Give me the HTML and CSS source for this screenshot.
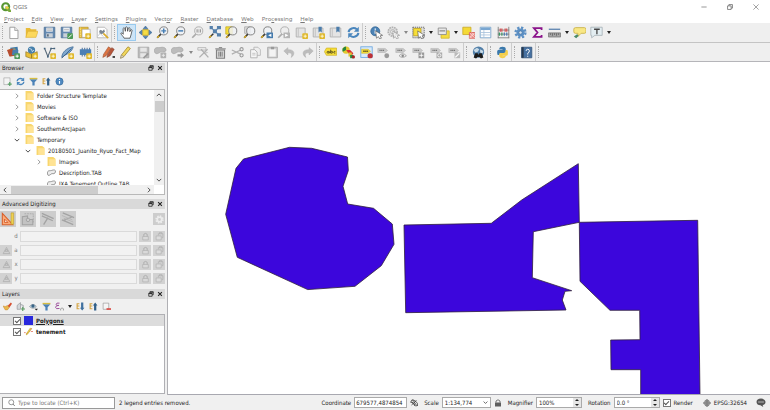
FILE: index.html
```
<!DOCTYPE html>
<html lang="en">
<head>
<meta charset="utf-8">
<title>QGIS</title>
<link rel="stylesheet" href="styles.css">
</head>
<body>
<svg class="defs" aria-hidden="true">
  <defs>
    <g id="plus"><rect x="9" y="9" width="7" height="7" rx="1" fill="#e0b92e"/><path d="M12.500 10.500v4M10.500 12.500h4" stroke="#fff8d8" stroke-width="1.200"/></g>
    <g id="gplus"><rect x="9" y="9" width="7" height="7" rx="1" fill="#4f9a5b"/><path d="M12.500 10.500v4M10.500 12.500h4" stroke="#fff" stroke-width="1.200"/></g>
    <g id="lens"><path d="M6 10L1.500 14.500" stroke="#333" stroke-width="2"/><path d="M4 12L1.500 14.500" stroke="#dcae20" stroke-width="1.600"/><circle cx="9.500" cy="6" r="5" fill="#eef1f4" fill-opacity=".85" stroke="#777" stroke-width="1.100"/></g>
    <g id="glens"><path d="M6 10L1.500 14.500" stroke="#aaa" stroke-width="2"/><circle cx="9.500" cy="6" r="5" fill="#eee" stroke="#aaa" stroke-width="1.100"/></g>
    <g id="cursor"><path d="M7 6l1 9 2.300-2 1.700 3 2-1-1.500-3 3-.5z" fill="#fff" stroke="#555" stroke-width=".8"/></g>
    <g id="gtag"><path d="M1 3h9l3 2.500L10 8H1z" fill="#c9c9c9" stroke="#aaa" stroke-width=".6"/><path d="M3 5.500h6" stroke="#777" stroke-width="1.500" stroke-dasharray="1.500 .6"/></g>
    <g id="blob"><path d="M1 8c-2-4 1-6.500 4-6 2 .3 3-.5 5-.5 5 0 6 4 3.500 5.500-2 1-3.500-.5-5.500.5S3 11 1 8z" fill="#bcbcbc" stroke="#a0a0a0" stroke-width=".8"/></g>
    <symbol id="i-new" viewBox="0 0 16 16"><path d="M3.500 1.500h6l4 4v10h-10z" fill="#fff" stroke="#8c8c8c"/><path d="M9.500 1.500v4h4" fill="#e6e6e6" stroke="#8c8c8c" stroke-width=".8"/></symbol>
    <symbol id="i-open" viewBox="0 0 16 16"><path d="M1 14V2.500h5L7.500 4H14v3" fill="#e8bb37"/><path d="M1 14L3.500 6.500H16L13.500 14z" fill="#fcd85c" stroke="#dcae36" stroke-width=".7"/></symbol>
    <symbol id="i-save" viewBox="0 0 16 16"><path d="M1.500 1.500h13v13h-13z" fill="#6389b1" stroke="#4d7196"/><path d="M4 2h8v5H4z" fill="#e9edf1"/><path d="M5 3.500h6M5 5.300h6" stroke="#999" stroke-width=".7"/><path d="M4 9h8v5H4z" fill="#c9d1d9"/><path d="M5 10h2v3H5z" fill="#567"/></symbol>
    <symbol id="i-saveas" viewBox="0 0 16 16"><path d="M1.500 1.500h13v13h-13z" fill="#6389b1" stroke="#4d7196"/><path d="M4 2h8v5H4z" fill="#e9edf1"/><path d="M5 4.500h6" stroke="#999" stroke-width=".7"/><path d="M4 9h6v5H4z" fill="#c9d1d9"/><rect x="9" y="9" width="7" height="7" rx="1" fill="#4c9a56"/><path d="M10.500 14.500l4-4" stroke="#fff" stroke-width="1.200"/></symbol>
    <symbol id="i-layout" viewBox="0 0 16 16"><path d="M1.500 1.500h11v13h-11z" fill="#e9bd35" stroke="#b08b25" stroke-width=".8"/><path d="M5 4h10v10H5z" fill="#fff" stroke="#999" stroke-width=".7"/><path d="M3 2v12" stroke="#fff3b0" stroke-dasharray="1 1"/><use href="#plus"/></symbol>
    <symbol id="i-style" viewBox="0 0 16 16"><path d="M1.500 1.500h9l3 3v10h-12z" fill="#fff" stroke="#9a9a9a" stroke-width=".8"/><path d="M3 12l4-7M4 8l5 5" stroke="#b6bec6"/><path d="M9 9l6 6" stroke="#d9ab2a" stroke-width="2"/><path d="M5 4.500a3 3 0 0 0 4 4.500l2-2-1-3-2 2z" fill="#7c8791"/></symbol>
    <symbol id="i-hand" viewBox="0 0 16 16"><path d="M5 15c-.5-2-3.500-4-4-6 1-1.200 2.500.3 3 1.200L3.800 3c.8-1.200 2-.7 2.200.3l.6 3.200L6.700 2c.5-1.300 2-1.300 2.300 0l.4 4.500L10.300 2.500c.7-1 1.900-.6 2 .5l-.2 4 1.200-2.200c1-.7 1.700 0 1.500 1L13.500 11l-1.200 4z" fill="#fff" stroke="#383838" stroke-width=".9" stroke-linejoin="round"/></symbol>
    <symbol id="i-pansel" viewBox="0 0 16 16"><path d="M4.500 4.500h7v7h-7z" fill="#f5dc43" stroke="#b79c24"/><path d="M8 0l3 3.500H5zM8 16l3-3.500H5zM0 8l3.500-3v6zM16 8l-3.500-3v6z" fill="#4c7eaf" stroke="#335e88" stroke-width=".5"/></symbol>
    <symbol id="i-zin" viewBox="0 0 16 16"><use href="#lens"/><path d="M9.500 3v6M6.500 6h6" stroke="#467fb5" stroke-width="1.800"/></symbol>
    <symbol id="i-zout" viewBox="0 0 16 16"><use href="#lens"/><path d="M6.500 6h6" stroke="#467fb5" stroke-width="1.800"/></symbol>
    <symbol id="i-znat" viewBox="0 0 16 16"><use href="#glens"/><path d="M7.500 4v4M11.500 4v4M9.500 4.500v1M9.500 6.800v1" stroke="#777"/></symbol>
    <symbol id="i-zfull" viewBox="0 0 16 16"><path d="M3 1l4 4M15 1l-5 4M15 12l-5-4" stroke="#7b9cbd" stroke-width="1.500"/><path d="M2 0h4v4H2zM11 0h5v4h-5zM11 9h5v4h-5zM6 4h5v5H6z" fill="#5580ab"/><path d="M6.500 9.500L1.500 14.500" stroke="#333" stroke-width="1.800"/><path d="M4 12l-2.500 2.500" stroke="#dcae20" stroke-width="1.600"/></symbol>
    <symbol id="i-zsel" viewBox="0 0 16 16"><path d="M1 1h8v9H1z" fill="#f4df36" stroke="#c7ad24"/><use href="#lens"/></symbol>
    <symbol id="i-zlay" viewBox="0 0 16 16"><path d="M2 1h7v8H2z" fill="#ddd" stroke="#aaa"/><use href="#lens"/></symbol>
    <symbol id="i-zlast" viewBox="0 0 16 16"><use href="#lens"/><rect x="8" y="8" width="8" height="7" fill="#457bad"/><path d="M14 9.500l-4 2 4 2" fill="#fff"/></symbol>
    <symbol id="i-znext" viewBox="0 0 16 16"><use href="#glens"/><rect x="8" y="8" width="8" height="7" fill="#b5b5b5"/><path d="M10 9.500l4 2-4 2" fill="#fff"/></symbol>
    <symbol id="i-bmap" viewBox="0 0 16 16"><path d="M1.500 2.500h11v11h-11z" fill="#e4e4e4" stroke="#aaa"/><path d="M4 3v10" stroke="#bbb"/><use href="#plus"/></symbol>
    <symbol id="i-bnew" viewBox="0 0 16 16"><path d="M1.500 2.500h12v11h-12z" fill="#e4e4e4" stroke="#aaa"/><path d="M4 3v10" stroke="#bbb"/><path d="M8 1h4v7l-2-1.500L8 8z" fill="#4b7caa"/><use href="#plus"/></symbol>
    <symbol id="i-bshow" viewBox="0 0 16 16"><path d="M1.500 2.500h13v11h-13z" fill="#e4e4e4" stroke="#aaa"/><path d="M4 3v10" stroke="#bbb"/><path d="M9 1h4v7l-2-1.500L9 8z" fill="#4b7caa"/></symbol>
    <symbol id="i-refresh" viewBox="0 0 16 16"><path d="M2 7.500a6 5.500 0 0 1 10-3.500M14 8.500a6 5.500 0 0 1-10 3.500" fill="none" stroke="#4a86bd" stroke-width="2.600"/><path d="M14.500 1v6H8.500zM1.500 15V9h6z" fill="#4a86bd"/></symbol>
    <symbol id="i-ident" viewBox="0 0 16 16"><circle cx="6.500" cy="6.500" r="5.500" fill="#4b82b5" stroke="#386a99"/><path d="M6.500 5.500v4M6.500 3v1.500" stroke="#fff" stroke-width="1.700"/><use href="#cursor"/></symbol>
    <symbol id="i-ggear" viewBox="0 0 16 16"><circle cx="7" cy="7" r="5.500" fill="#ddd" stroke="#b0b0b0" stroke-width="2" stroke-dasharray="2 1"/><circle cx="7" cy="7" r="2.500" fill="#f2f2f2" stroke="#aaa"/><use href="#cursor" opacity=".6"/></symbol>
    <symbol id="i-select" viewBox="0 0 16 16"><path d="M1 1.500h14v13H1z" fill="#ddd" stroke="#555" stroke-dasharray="1.500 1"/><path d="M2 3h9v9H2z" fill="#f7df37" stroke="#c0a21c"/><use href="#cursor"/></symbol>
    <symbol id="i-desel" viewBox="0 0 16 16"><path d="M5 6h10v9H5z" fill="#f4dc3f" stroke="#d3b62c"/><path d="M1.500 2.500h10v8h-10z" fill="#e8e8e8" stroke="#888"/><path d="M3 6h7" stroke="#888" stroke-width="1.500"/></symbol>
    <symbol id="i-unsel" viewBox="0 0 16 16"><path d="M1 1.500h10v9H1z" fill="#f4d936" stroke="#c9aa28"/><rect x="9" y="8" width="7" height="7" fill="#ed8d87" stroke="#d75750"/><path d="M9 8l7 7M9 12l3 3M12 8l4 4M16 8l-7 7" stroke="#fff" stroke-width=".7"/></symbol>
    <symbol id="i-table" viewBox="0 0 16 16"><path d="M1.500 1.500h13v13h-13z" fill="#fff" stroke="#6d9bc6"/><path d="M2 2h12v3H2z" fill="#79a6d1"/><path d="M2 8h12M2 11h12M6 5v9" stroke="#a7c1dc"/></symbol>
    <symbol id="i-abacus" viewBox="0 0 16 16"><path d="M1.500 1v14M14.500 1v14M1 14.500h14M1 10h14M1 5h14" stroke="#777"/><path d="M4 3v4M6 3v4M10 3v4M12 3v4" stroke="#d24f51" stroke-width="1.500"/><path d="M3 8v4M6 8v4" stroke="#3c9665" stroke-width="1.500"/><path d="M9 8v4M12 8v4" stroke="#4b79b1" stroke-width="1.500"/></symbol>
    <symbol id="i-gear" viewBox="0 0 16 16"><circle cx="8" cy="8" r="6" fill="none" stroke="#5d90c4" stroke-width="3" stroke-dasharray="2.700 2"/><circle cx="8" cy="8" r="5" fill="#5d90c4"/><circle cx="8" cy="8" r="2" fill="#d7e4f0" stroke="#39689a" stroke-width=".7"/></symbol>
    <symbol id="i-sum" viewBox="0 0 16 16"><path d="M13 5V2.500H3.500L8 8l-4.500 5.500H13V11" fill="none" stroke="#8b148b" stroke-width="2.200"/></symbol>
    <symbol id="i-measure" viewBox="0 0 16 16"><path d="M1 4h14" stroke="#527baa" stroke-width="1.500"/><path d="M.5 8.500h15v5H.5z" fill="#a6a6a6" stroke="#777"/><path d="M3 9v2M5.500 9v3M8 9v2M10.500 9v3M13 9v2" stroke="#444" stroke-width=".7"/></symbol>
    <symbol id="i-tip" viewBox="0 0 16 16"><path d="M3 2h11q2 0 2 2v3q0 2-2 2h-4l-4 4V9H3Q1 9 1 7V4q0-2 2-2z" fill="#f8e785" stroke="#c8ae3c"/><path d="M1 13l4-3 2 2-3 3z" fill="#4c8b68"/></symbol>
    <symbol id="i-text" viewBox="0 0 16 16"><path d="M1 1.500h14v10H6l-4 3v-3H1z" fill="#e3edf1" stroke="#a5b0b6"/><path d="M5 4h7M8.500 4v6" stroke="#444" stroke-width="1.600"/></symbol>
    <symbol id="i-source" viewBox="0 0 16 16"><path d="M4 2l9-1 1 9-9 1z" fill="#3b78a8"/><path d="M2 4l8-1 3 8-9 2z" fill="#e2a437"/><path d="M0 5l7-2 3 9-7 1z" fill="#b64e31"/><path d="M7 4l7 1-1 7-7-1z" fill="#487fae"/><use href="#gplus"/></symbol>
    <symbol id="i-gpkg" viewBox="0 0 16 16"><circle cx="8" cy="5" r="4.500" fill="#4680ac"/><path d="M5 3l3 1 1 3 2-2" fill="none" stroke="#dfe9ef"/><path d="M1 7l7 3 7-3v6l-7 2.500L1 13z" fill="#e9bf38" stroke="#8a7220" stroke-width=".8"/><path d="M8 10v5" stroke="#8a7220"/><use href="#plus"/></symbol>
    <symbol id="i-vector" viewBox="0 0 16 16"><path d="M2 3l4 10 4-10h4" fill="none" stroke="#596b7b" stroke-width="1.300"/><path d="M1 2h2v2H1zM9 2h2v2H9zM13 2h2v2h-2zM5 12h2v2H5z" fill="#44647f"/><use href="#plus"/></symbol>
    <symbol id="i-feather" viewBox="0 0 16 16"><path d="M1 14C1 8 7 2 15 1c-1 5-6 9-12 11z" fill="#80a9cf" stroke="#456f99"/><path d="M1 15L13 3" stroke="#305984"/><use href="#plus"/></symbol>
    <symbol id="i-chip" viewBox="0 0 16 16"><path d="M4 2v11M7 2v11M10 2v11M13 2v11" stroke="#56779c" stroke-width="1.300"/><path d="M1 4h14v7H1z" fill="#4b7fb5"/><use href="#plus"/></symbol>
    <symbol id="i-pencils" viewBox="0 0 16 16"><path d="M1 14l1-4L8 1l3 2-6 9z" fill="#dc7342" stroke="#9a5131" stroke-width=".7"/><path d="M6 14l1-4 5-8 3 2-5 8z" fill="#b5553a" stroke="#813d29" stroke-width=".7"/><path d="M13 12.500h3v2h-3z" fill="#222"/></symbol>
    <symbol id="i-pencil" viewBox="0 0 16 16"><path d="M2 15l1-4L11 1l3 2-8 10z" fill="#f0d65c" stroke="#a58b2c"/><path d="M2 15l1-4 3 2z" fill="#eee0b9" stroke="#777" stroke-width=".6"/></symbol>
    <symbol id="i-gsave" viewBox="0 0 16 16"><path d="M1.500 1.500h13v13h-13z" fill="#bbb" stroke="#a5a5a5"/><path d="M4 2h8v5H4zM4 9h7v5H4z" fill="#e6e6e6"/><path d="M8 15l6-6" stroke="#999" stroke-width="2"/></symbol>
    <symbol id="i-blob" viewBox="0 0 16 16"><use href="#blob"/><rect x="8" y="8" width="7" height="7" rx="1" fill="#b2b2b2"/><path d="M11.500 9.500v4M9.500 11.500h4" stroke="#eee"/></symbol>
    <symbol id="i-blobmove" viewBox="0 0 16 16"><use href="#blob"/><path d="M8 10h4V8l4 3.500-4 3.500v-2H8z" fill="#999"/></symbol>
    <symbol id="i-node" viewBox="0 0 16 16"><path d="M5 4l9 10M3 14L13 4" stroke="#b0b0b0" stroke-width="1.600"/><path d="M1 2h10v3H1zM9 9l4-1" fill="none" stroke="#b0b0b0"/></symbol>
    <symbol id="i-trash" viewBox="0 0 16 16"><path d="M3 5h10v10H3z" fill="#d3d3d3" stroke="#808080" stroke-width="1.300"/><path d="M1.500 3.500h13M6 2h4M6 7v6M8 7v6M10 7v6" stroke="#808080" stroke-width="1.200"/></symbol>
    <symbol id="i-cut" viewBox="0 0 16 16"><path d="M1 5l11 5M1 10l11-5" stroke="#b0b0b0" stroke-width="1.400"/><circle cx="13" cy="4" r="2" fill="none" stroke="#999" stroke-width="1.300"/><circle cx="13" cy="11.500" r="2" fill="none" stroke="#999" stroke-width="1.300"/></symbol>
    <symbol id="i-copy" viewBox="0 0 16 16"><path d="M6 1.500h5l3 3v7H6z" fill="#eee" stroke="#b3b3b3"/><path d="M2 4.500h5l3 3v7H2z" fill="#f6f6f6" stroke="#aaa"/><path d="M4 9h4M4 11h4" stroke="#bbb"/></symbol>
    <symbol id="i-paste" viewBox="0 0 16 16"><path d="M2 1.500h12v13H2z" fill="#ccc" stroke="#a5a5a5"/><path d="M4 4h8v9H4z" fill="#f3f3f3"/><path d="M6 1h4v3H6z" fill="#999"/></symbol>
    <symbol id="i-undo" viewBox="0 0 16 16"><path d="M1 6l5-4v2.500c9-.5 9 6.500 4 9.500 2-4 0-6-4-5.500V11z" fill="#bcbcbc" stroke="#a8a8a8" stroke-width=".5"/></symbol>
    <symbol id="i-redo" viewBox="0 0 16 16"><path d="M15 6l-5-4v2.500C1 4 1 11 6 14 4 10 6 8 10 8.500V11z" fill="#bcbcbc" stroke="#a8a8a8" stroke-width=".5"/></symbol>
    <symbol id="i-abc" viewBox="0 0 16 16"><path d="M3 2.500h12.500v9H3L.5 7z" fill="#f7df38" stroke="#c9ac25" stroke-width=".8"/><circle cx="5" cy="7.700" r="1.200" fill="none" stroke="#4b441e"/><path d="M6.500 6.500V9M8.200 4.500V9" stroke="#4b441e"/><circle cx="9.500" cy="7.700" r="1.200" fill="none" stroke="#4b441e"/><path d="M14 6.700q-2-.6-2 1t2 1" fill="none" stroke="#4b441e"/></symbol>
    <symbol id="i-diagram" viewBox="0 0 16 16"><circle cx="5" cy="5" r="4.500" fill="#e3c92c"/><path d="M5 5V.5A4.500 4.500 0 0 0 1 7z" fill="#28863d"/><path d="M5 5h5l4 4-3 4z" fill="#db3030"/><path d="M8 8h4v5H8z" fill="#e1c333"/><path d="M10 11h4v4h-4z" fill="#278c3d"/><circle cx="14" cy="13.500" r="2" fill="#a62725"/></symbol>
    <symbol id="i-pin" viewBox="0 0 16 16"><rect x="1" y="1" width="14" height="13" fill="#d8eafa" stroke="#64a3df"/><path d="M2 4h8l3 2.500L10 9H2z" fill="#f7df38" stroke="#c9ac25" stroke-width=".6"/><path d="M4 6.500h6" stroke="#5b511c" stroke-width="2" stroke-dasharray="1.800 .6"/><circle cx="12.500" cy="12" r="3.200" fill="#bc3036"/></symbol>
    <symbol id="i-lpin" viewBox="0 0 16 16"><use href="#gtag"/><circle cx="12" cy="12" r="3" fill="#999"/></symbol>
    <symbol id="i-leye" viewBox="0 0 16 16"><use href="#gtag"/><path d="M5 12q4-5 9 0-5 4-9 0z" fill="#eee" stroke="#999"/><circle cx="9.500" cy="12" r="1.500" fill="#888"/></symbol>
    <symbol id="i-lmove" viewBox="0 0 16 16"><use href="#gtag"/><rect x="8" y="8" width="7" height="7" fill="#999"/><path d="M9 11.500h5M11.500 9v5" stroke="#fff"/></symbol>
    <symbol id="i-lrot" viewBox="0 0 16 16"><use href="#gtag"/><rect x="8" y="8" width="7" height="7" fill="#aaa"/><circle cx="11.500" cy="11.500" r="2" fill="none" stroke="#fff"/></symbol>
    <symbol id="i-ledit" viewBox="0 0 16 16"><use href="#gtag"/><rect x="8" y="8" width="7" height="7" fill="#bbb"/><path d="M9 14l5-5" stroke="#fff" stroke-width="1.500"/></symbol>
    <symbol id="i-globe" viewBox="0 0 16 16"><circle cx="8" cy="7.500" r="7" fill="#527fa8"/><path d="M2 5l4-3 3 2-2 3-3 1zM10 4l4 2-1 3-3-1z" fill="#c8dae6"/><path d="M2 14l2-5h3l1 2 1-2h3l2 5-3 1.500-2-2H7l-2 2z" fill="#1b1b1b"/></symbol>
    <symbol id="i-python" viewBox="0 0 16 16"><path d="M4 4q0-3 4-3t4 3v3q0 1.500-2 1.500H6q-2 0-2 2.500H2Q1 9 1.500 6 2 4.500 4 4.500h4V4z" fill="#3b79ac"/><path d="M12 12q0 3-4 3t-4-3v-2q0-1.500 2-1.500h4q2 0 2-3.500h2q1.500 3 .5 6-.5 1-2 1H8v.5z" fill="#f5cf4b"/></symbol>
    <symbol id="i-help" viewBox="0 0 16 16"><path d="M2 1.500h12.500v13H2z" fill="#4670a0" stroke="#34557b"/><path d="M2 1.500h2.500v13H2z" fill="#27394e"/><path d="M7.500 6q0-2 2-2t2 2-2 3v1.500M9.500 12v1.300" fill="none" stroke="#fff" stroke-width="1.200"/></symbol>
    <symbol id="i-addlay" viewBox="0 0 16 16"><path d="M1.500 1.500h11v12h-11z" fill="#f4f4f4" stroke="#999"/><path d="M12 9v7M8.500 12.500h7" stroke="#5aa269" stroke-width="2.200"/></symbol>
    <symbol id="i-filter" viewBox="0 0 16 16"><path d="M1 4h14L10 9.500V15H6V9.500z" fill="#4b82b7"/><path d="M1 1.500h14V4H1z" fill="#d7bd42"/></symbol>
    <symbol id="i-collapse" viewBox="0 0 16 16"><path d="M2 2v11M2 3h4M2 7h4M2 12h4" stroke="#d3a343" stroke-width="2"/><path d="M11 1l4 5h-2v9H9V6H7z" fill="#315f88"/></symbol>
    <symbol id="i-expand" viewBox="0 0 16 16"><path d="M2 2v11M2 3h4M2 7h4M2 12h4" stroke="#d3a343" stroke-width="2"/><path d="M11 15l4-5h-2V1H9v9H7z" fill="#3f70a0"/></symbol>
    <symbol id="i-info" viewBox="0 0 16 16"><circle cx="8" cy="8" r="6.500" fill="#4f89c0" stroke="#376998"/><path d="M8 7v5M8 3.500v2" stroke="#fff" stroke-width="2"/></symbol>
    <symbol id="i-folder" viewBox="0 0 16 16"><path d="M1 0h10l4 3v13H1z" fill="#f8d66d"/><path d="M4 4h11v12H4z" fill="#ffe394"/></symbol>
    <symbol id="i-poly" viewBox="0 0 16 16"><path d="M2 13c-2-2-2-7 1-8 3-.5 4 0 6-1 3-1 7-1 6 3s-4 3-6 3-4 4-7 3z" fill="#ededed" stroke="#777" stroke-width="1.300"/></symbol>
    <symbol id="i-right" viewBox="0 0 16 16"><path d="M5 2l6 6-6 6" fill="none" stroke="#777" stroke-width="2"/></symbol>
    <symbol id="i-down" viewBox="0 0 16 16"><path d="M2 5l6 6 6-6" fill="none" stroke="#444" stroke-width="2.500"/></symbol>
    <symbol id="i-up" viewBox="0 0 16 16"><path d="M2 11l6-6 6 6" fill="none" stroke="#444" stroke-width="2.500"/></symbol>
    <symbol id="i-left" viewBox="0 0 16 16"><path d="M11 2L5 8l6 6" fill="none" stroke="#444" stroke-width="2.500"/></symbol>
    <symbol id="i-next" viewBox="0 0 16 16"><path d="M5 2l6 6-6 6" fill="none" stroke="#444" stroke-width="2.500"/></symbol>
    <symbol id="i-float" viewBox="0 0 16 16"><path d="M5 5V2h9v8h-3" fill="none" stroke="#222" stroke-width="2"/><path d="M2 6h9v8H2z" fill="none" stroke="#222" stroke-width="2"/><path d="M5 3h9M2 7h9" stroke="#222" stroke-width="2.500"/></symbol>
    <symbol id="i-close" viewBox="0 0 16 16"><path d="M3 3l10 10M13 3L3 13" stroke="#222" stroke-width="2.800"/></symbol>
    <symbol id="i-triangle" viewBox="0 0 16 16"><path d="M1.500 1.500v13h12z" fill="#fbab79" stroke="#d9602c" stroke-width="1.200"/><path d="M4 8v4h4z" fill="#f1ddd0" stroke="#d9602c"/><path d="M11.500 1h3v13h-3z" fill="#efd04f" stroke="#b89a2d" stroke-width=".7"/></symbol>
    <symbol id="i-construct" viewBox="0 0 16 16"><path d="M1.500 14.500v-9l6-1v4h6v6z" fill="#c2c2c2" stroke="#a3a3a3" stroke-width="1.200"/><path d="M4 2h10v10" fill="none" stroke="#a8a8a8" stroke-dasharray="2 1"/><circle cx="8" cy="9" r="2" fill="#ccc" stroke="#a0a0a0"/></symbol>
    <symbol id="i-perp" viewBox="0 0 16 16"><path d="M1 1.500L14.500 7.500M1 4.500L13.500 10M8 6.500L3 14.500" fill="none" stroke="#a3a3a3" stroke-width="1.500"/></symbol>
    <symbol id="i-para" viewBox="0 0 16 16"><path d="M2 1l13 5.500M1 9l13 5.500M12 6L3 9.500" fill="none" stroke="#a3a3a3" stroke-width="1.500"/><path d="M1 4l12 5M3 7l11 4.500" stroke="#b5b5b5"/></symbol>
    <symbol id="i-angle" viewBox="0 0 16 16"><path d="M2 13.500L8 2.500l6 11zM5.500 9.500l2.500-4 2.500 4z" fill="none" stroke="#ababab" stroke-width="1.300"/></symbol>
    <symbol id="i-glock" viewBox="0 0 16 16"><path d="M5 8V4q3-3 6 0v4" fill="none" stroke="#aaa" stroke-width="1.500"/><path d="M3 8h10v6H3z" fill="#d9d9d9" stroke="#aaa"/></symbol>
    <symbol id="i-gmulti" viewBox="0 0 16 16"><path d="M6 6V3h8v7h-2M8 3V1h4v2" fill="none" stroke="#aaa"/><path d="M2 7h9v7H2z" fill="#dcdcdc" stroke="#aaa"/></symbol>
    <symbol id="i-cog" viewBox="0 0 16 16"><circle cx="8" cy="8" r="6" fill="none" stroke="#ececec" stroke-width="3" stroke-dasharray="2.700 2"/><circle cx="8" cy="8" r="4" fill="none" stroke="#ececec" stroke-width="3"/></symbol>
    <symbol id="i-brush" viewBox="0 0 16 16"><path d="M8 7l6-6 2 2-5 7z" fill="#d64e2e"/><path d="M0 7l4 1 4-2 3 4-3 4H4z" fill="#eab84d" stroke="#c1842d" stroke-width=".8"/></symbol>
    <symbol id="i-group" viewBox="0 0 16 16"><path d="M2 13V6l6-5v12zM8 4l5 2v6" fill="#d3d7da" stroke="#84888b"/><path d="M12 9v7M9 12.500h7" stroke="#589b60" stroke-width="2"/></symbol>
    <symbol id="i-eye" viewBox="0 0 16 16"><path d="M1 8q6-7 12 0-6 6-12 0z" fill="#dce9ef" stroke="#596a78"/><circle cx="7" cy="7" r="3" fill="#396486"/><path d="M10 12h6l-3 3z" fill="#222"/></symbol>
    <symbol id="i-eps" viewBox="0 0 16 16"><path d="M8 2q-6-1-6 2t5 2Q1 6 1 9.500t7 2" fill="none" stroke="#9c4d9a" stroke-width="1.700"/><path d="M10 15v-3q2.500-3 5 0v3" fill="none" stroke="#888" stroke-width="1.300"/></symbol>
    <symbol id="i-remove" viewBox="0 0 16 16"><path d="M2 2h10v11H2z" fill="#f5f5f5" stroke="#888"/><path d="M8 12.500h8" stroke="#dc4c45" stroke-width="3"/></symbol>
    <symbol id="i-line" viewBox="0 0 16 16"><path d="M0 10h3M12 8h4M4 12l4-3 3-3 3-4" stroke="#e37b68" stroke-width="1.500" fill="none"/><path d="M4 14l1-3 6-9 2 1-6 9z" fill="#f2d84b" stroke="#b69423"/></symbol>
    <symbol id="i-search" viewBox="0 0 16 16"><circle cx="8.500" cy="6.500" r="5" fill="none" stroke="#777" stroke-width="1.500"/><path d="M12 10l3.500 4" stroke="#777" stroke-width="1.800"/></symbol>
    <symbol id="i-extent" viewBox="0 0 16 16"><path d="M2 3q5-3 10 2t3 9M1 7q6-3 9 7M5 1l9 13M3 12l10-9M1 4l11 11" stroke="#333" stroke-width="1.500" fill="none"/></symbol>
    <symbol id="i-lock" viewBox="0 0 16 16"><path d="M4 7V4q4-5 8 0v3" fill="none" stroke="#777" stroke-width="2"/><path d="M2 7h12v8H2z" fill="#5e5e5e"/></symbol>
    <symbol id="i-crs" viewBox="0 0 16 16"><path d="M4 3l4-3 4 3 4 5-4 5-4 3-4-3-4-5z" fill="#969696"/><path d="M0 8h16M8 0v16M4 3q4 3 8 0M4 13q4-3 8 0" stroke="#6e6e6e" fill="none"/></symbol>
    <symbol id="i-chat" viewBox="0 0 16 16"><path d="M8 1C3 1 0 3.500 0 7s3 6 7 6l5 3-1-3.500C14 12 16 10 16 7s-3-6-8-6z" fill="#555"/><path d="M3.500 7h2M7 7h2M10.500 7h2" stroke="#fff" stroke-width="2"/></symbol>
  </defs>
</svg>

<header class="titlebar">
  <svg class="logo" viewBox="0 0 16 16" aria-hidden="true"><circle cx="7.500" cy="7.500" r="5.500" fill="none" stroke="#589632" stroke-width="3.500"/><path d="M7 7h4l5 6v3h-3.500L7 11z" fill="#78a83b"/><path d="M7 7h4l2 2-3 3-3-3z" fill="#eed144"/></svg>
  <span class="apptitle">QGIS</span>
  <div class="winbtns">
    <button aria-label="Minimize"><svg viewBox="0 0 16 16"><path d="M1 8h14" stroke="#777" stroke-width="2"/></svg></button>
    <button aria-label="Restore"><svg viewBox="0 0 16 16"><path d="M5 5V1.500h9.500V11H11M1.500 5H11v9.500H1.500z" fill="none" stroke="#666" stroke-width="2"/></svg></button>
    <button aria-label="Close"><svg viewBox="0 0 16 16"><path d="M1 1l14 14M15 1L1 15" stroke="#777" stroke-width="1.800"/></svg></button>
  </div>
</header>
<nav class="menubar">
  <a href="#"><u>P</u>roject</a><a href="#"><u>E</u>dit</a><a href="#"><u>V</u>iew</a><a href="#"><u>L</u>ayer</a><a href="#"><u>S</u>ettings</a><a href="#"><u>P</u>lugins</a><a href="#">Vect<u>o</u>r</a><a href="#"><u>R</u>aster</a><a href="#"><u>D</u>atabase</a><a href="#"><u>W</u>eb</a><a href="#">Pro<u>c</u>essing</a><a href="#"><u>H</u>elp</a>
</nav>

<div class="toolbar">
  <div class="group g-file">
    <button aria-label="New"><svg><use href="#i-new"/></svg></button><button aria-label="Open"><svg><use href="#i-open"/></svg></button><button aria-label="Save"><svg><use href="#i-save"/></svg></button><button aria-label="Save as"><svg><use href="#i-saveas"/></svg></button><button aria-label="New layout"><svg><use href="#i-layout"/></svg></button><button aria-label="Style manager"><svg><use href="#i-style"/></svg></button>
  </div>
  <div class="group g-nav">
    <button class="active" aria-label="Pan"><svg><use href="#i-hand"/></svg></button><button aria-label="Pan to selection"><svg><use href="#i-pansel"/></svg></button><button aria-label="Zoom in"><svg><use href="#i-zin"/></svg></button><button aria-label="Zoom out"><svg><use href="#i-zout"/></svg></button><button aria-label="Native zoom"><svg><use href="#i-znat"/></svg></button><button aria-label="Zoom full"><svg><use href="#i-zfull"/></svg></button><button aria-label="Zoom to selection"><svg><use href="#i-zsel"/></svg></button><button aria-label="Zoom to layer"><svg><use href="#i-zlay"/></svg></button><button aria-label="Zoom last"><svg><use href="#i-zlast"/></svg></button><button aria-label="Zoom next"><svg><use href="#i-znext"/></svg></button><button aria-label="New map view"><svg><use href="#i-bmap"/></svg></button><button aria-label="New bookmark"><svg><use href="#i-bnew"/></svg></button><button aria-label="Show bookmarks"><svg><use href="#i-bshow"/></svg></button><button aria-label="Refresh"><svg><use href="#i-refresh"/></svg></button>
  </div>
  <div class="group g-attr">
    <button aria-label="Identify"><svg><use href="#i-ident"/></svg></button><button aria-label="Run action"><svg><use href="#i-ggear"/></svg></button><button class="dd dim" aria-label="More actions"></button><button aria-label="Select"><svg><use href="#i-select"/></svg></button><button class="dd" aria-label="More select"></button><button aria-label="Select by value"><svg><use href="#i-desel"/></svg></button><button class="dd" aria-label="More select by value"></button><button aria-label="Deselect"><svg><use href="#i-unsel"/></svg></button><button aria-label="Attribute table"><svg><use href="#i-table"/></svg></button><button aria-label="Field calculator"><svg><use href="#i-abacus"/></svg></button><button aria-label="Toolbox"><svg><use href="#i-gear"/></svg></button><button aria-label="Statistics"><svg><use href="#i-sum"/></svg></button><button aria-label="Measure"><svg><use href="#i-measure"/></svg></button><button class="dd" aria-label="More measure"></button><button aria-label="Map tips"><svg><use href="#i-tip"/></svg></button><button aria-label="Annotation"><svg><use href="#i-text"/></svg></button><button class="dd" aria-label="More annotation"></button>
  </div>
</div>
<div class="toolbar">
  <div class="group g-src">
    <button aria-label="Data source"><svg><use href="#i-source"/></svg></button><button aria-label="GeoPackage"><svg><use href="#i-gpkg"/></svg></button><button aria-label="Shapefile"><svg><use href="#i-vector"/></svg></button><button aria-label="SpatiaLite"><svg><use href="#i-feather"/></svg></button><button aria-label="Memory layer"><svg><use href="#i-chip"/></svg></button>
  </div>
  <div class="group g-edit">
    <button aria-label="Current edits"><svg><use href="#i-pencils"/></svg></button><button aria-label="Toggle editing"><svg><use href="#i-pencil"/></svg></button><button aria-label="Save edits"><svg><use href="#i-gsave"/></svg></button><button aria-label="Add feature"><svg><use href="#i-blob"/></svg></button><button aria-label="Move feature"><svg><use href="#i-blobmove"/></svg></button><button class="dd dim" aria-label="More move"></button><button aria-label="Node tool"><svg><use href="#i-node"/></svg></button><button aria-label="Delete"><svg><use href="#i-trash"/></svg></button><button aria-label="Cut"><svg><use href="#i-cut"/></svg></button><button aria-label="Copy"><svg><use href="#i-copy"/></svg></button><button aria-label="Paste"><svg><use href="#i-paste"/></svg></button><button aria-label="Undo"><svg><use href="#i-undo"/></svg></button><button aria-label="Redo"><svg><use href="#i-redo"/></svg></button>
  </div>
  <div class="group g-label">
    <button aria-label="Labels"><svg><use href="#i-abc"/></svg></button><button aria-label="Diagrams"><svg><use href="#i-diagram"/></svg></button><button aria-label="Highlight pinned"><svg><use href="#i-pin"/></svg></button><button aria-label="Pin labels"><svg><use href="#i-lpin"/></svg></button><button aria-label="Show labels"><svg><use href="#i-leye"/></svg></button><button aria-label="Move label"><svg><use href="#i-lmove"/></svg></button><button aria-label="Rotate label"><svg><use href="#i-lrot"/></svg></button><button aria-label="Change label"><svg><use href="#i-ledit"/></svg></button>
  </div>
  <div class="group g-one"><button aria-label="MetaSearch"><svg><use href="#i-globe"/></svg></button></div>
  <div class="group g-one"><button aria-label="Python console"><svg><use href="#i-python"/></svg></button></div>
  <div class="group g-one"><button aria-label="Help"><svg><use href="#i-help"/></svg></button></div>
  <div class="group"></div>
</div>

<main class="work">
  <aside class="side">
    <section class="panel">
      <h2>Browser<span><button aria-label="Float"><svg><use href="#i-float"/></svg></button><button aria-label="Close"><svg><use href="#i-close"/></svg></button></span></h2>
      <div class="tools"><button aria-label="Add"><svg><use href="#i-addlay"/></svg></button><button aria-label="Refresh"><svg><use href="#i-refresh"/></svg></button><button aria-label="Filter"><svg><use href="#i-filter"/></svg></button><button aria-label="Collapse"><svg><use href="#i-collapse"/></svg></button><button aria-label="Properties"><svg><use href="#i-info"/></svg></button></div>
      <div class="treebox">
        <ul class="tree">
          <li class="l1"><svg class="chev"><use href="#i-right"/></svg><svg><use href="#i-folder"/></svg>Folder Structure Template</li>
          <li class="l1"><svg class="chev"><use href="#i-right"/></svg><svg><use href="#i-folder"/></svg>Movies</li>
          <li class="l1"><svg class="chev"><use href="#i-right"/></svg><svg><use href="#i-folder"/></svg>Software &amp; ISO</li>
          <li class="l1"><svg class="chev"><use href="#i-right"/></svg><svg><use href="#i-folder"/></svg>SouthernArcJapan</li>
          <li class="l1"><svg class="chev"><use href="#i-down"/></svg><svg><use href="#i-folder"/></svg>Temporary</li>
          <li class="l2"><svg class="chev"><use href="#i-down"/></svg><svg><use href="#i-folder"/></svg>20180501_Juanito_Ryuo_Fact_Map</li>
          <li class="l3"><svg class="chev"><use href="#i-right"/></svg><svg><use href="#i-folder"/></svg>Images</li>
          <li class="l3"><span class="chev"></span><svg><use href="#i-poly"/></svg>Description.TAB</li>
          <li class="l3"><span class="chev"></span><svg><use href="#i-poly"/></svg>IXA Tenement Outline.TAB</li>
        </ul>
        <div class="vbar"><svg><use href="#i-up"/></svg><i></i><svg><use href="#i-down"/></svg></div>
        <div class="hbar"><svg><use href="#i-left"/></svg><i></i><svg><use href="#i-next"/></svg></div>
      </div>
    </section>

    <section class="panel">
      <h2>Advanced Digitizing<span><button aria-label="Float"><svg><use href="#i-float"/></svg></button><button aria-label="Close"><svg><use href="#i-close"/></svg></button></span></h2>
      <div class="cad"><button aria-label="Enable"><svg><use href="#i-triangle"/></svg></button><button aria-label="Construction"><svg><use href="#i-construct"/></svg></button><button aria-label="Perpendicular"><svg><use href="#i-perp"/></svg></button><button aria-label="Parallel"><svg><use href="#i-para"/></svg></button><button class="small" aria-label="Settings"><svg><use href="#i-cog"/></svg></button></div>
      <div class="field"><span class="blank"></span><label for="d">d</label><input id="d" disabled><button aria-label="Lock d"><svg><use href="#i-glock"/></svg></button><button aria-label="Repeat d"><svg><use href="#i-gmulti"/></svg></button></div>
      <div class="field"><button aria-label="Relative a"><svg><use href="#i-angle"/></svg></button><label for="a">a</label><input id="a" disabled><button aria-label="Lock a"><svg><use href="#i-glock"/></svg></button><button aria-label="Repeat a"><svg><use href="#i-gmulti"/></svg></button></div>
      <div class="field"><button aria-label="Relative x"><svg><use href="#i-angle"/></svg></button><label for="x">x</label><input id="x" disabled><button aria-label="Lock x"><svg><use href="#i-glock"/></svg></button><button aria-label="Repeat x"><svg><use href="#i-gmulti"/></svg></button></div>
      <div class="field"><button aria-label="Relative y"><svg><use href="#i-angle"/></svg></button><label for="y">y</label><input id="y" disabled><button aria-label="Lock y"><svg><use href="#i-glock"/></svg></button><button aria-label="Repeat y"><svg><use href="#i-gmulti"/></svg></button></div>
    </section>

    <section class="panel layers">
      <h2>Layers<span><button aria-label="Float"><svg><use href="#i-float"/></svg></button><button aria-label="Close"><svg><use href="#i-close"/></svg></button></span></h2>
      <div class="tools"><button aria-label="Styling"><svg><use href="#i-brush"/></svg></button><button aria-label="Add group"><svg><use href="#i-group"/></svg></button><button aria-label="Visibility"><svg><use href="#i-eye"/></svg></button><button aria-label="Filter"><svg><use href="#i-filter"/></svg></button><button aria-label="Expression filter"><svg><use href="#i-eps"/></svg></button><button class="dd" aria-label="More filter"></button><button aria-label="Expand"><svg><use href="#i-expand"/></svg></button><button aria-label="Collapse"><svg><use href="#i-collapse"/></svg></button><button aria-label="Remove"><svg><use href="#i-remove"/></svg></button></div>
      <ul class="layerlist">
        <li class="current"><input type="checkbox" id="lp" checked><span class="swatch"></span><label for="lp"><u>Polygons</u></label></li>
        <li><input type="checkbox" id="lt" checked><svg><use href="#i-line"/></svg><label for="lt">tenement</label></li>
      </ul>
    </section>
  </aside>

  <section class="map" aria-label="Map">
    <svg>
      <g transform="translate(-168 -62)" fill="#3c06dc" stroke="#30203c" stroke-width=".8">
        <path d="M243.500 159L273 151.500l16.500-4.200 22.200 1 35.800 8.700 .8 13.500L343 186.300l4.700 17.700 25.800 4.300L392.300 224l1.700 20.300-12.700 21.400L355 286.300l-47.300 3.300-70.400-32.300-11.600-43L236 168.300z"/>
        <path d="M404 225l87.300-1.700L521.700 200l56.600-36.300 1 58.600-46 9.400-1 46L571.700 290.700l-6.700.6-2.700 8.700 3.700 10-160.300 2.700z"/>
        <path d="M579.300 222.300l118.400-2L700 396h-59.300v-26.300H611L610.700 340l29.300-.3-.3-29.400H610l-30-29z"/>
      </g>
    </svg>
  </section>
</main>

<footer class="status">
  <label class="locate"><svg><use href="#i-search"/></svg><input type="text" placeholder="Type to locate (Ctrl+K)" aria-label="Locate"></label>
  <span class="msg">2 legend entries removed.</span>
  <label for="coord">Coordinate</label><input id="coord" class="coord" value="679577,4874854"><button aria-label="Extents"><svg><use href="#i-extent"/></svg></button>
  <label for="scale" class="near">Scale</label><span class="scale"><select id="scale"><option>1:134,774</option></select><svg><use href="#i-down"/></svg></span><button aria-label="Lock scale"><svg><use href="#i-lock"/></svg></button>
  <label for="mag" class="near">Magnifier</label><span class="spin"><input id="mag" value="100%"><span class="arrows"><button aria-label="Increase magnifier"></button><button aria-label="Decrease magnifier"></button></span></span>
  <label for="rot" class="near">Rotation</label><span class="spin"><input id="rot" value="0.0 °"><span class="arrows"><button aria-label="Increase rotation"></button><button aria-label="Decrease rotation"></button></span></span>
  <input type="checkbox" id="render" checked><label for="render">Render</label>
  <button class="crs"><svg><use href="#i-crs"/></svg>EPSG:32654</button>
  <button class="chat" aria-label="Messages"><svg><use href="#i-chat"/></svg></button>
</footer>
</body>
</html>
```
FILE: styles.css
```
* { box-sizing: border-box; }
html, body { height: 100%; margin: 0; }
body {
  display: flex;
  flex-direction: column;
  overflow: hidden;
  background: #f0f0f0;
  color: #222;
  font: 6px/8px "DejaVu Sans Condensed", "DejaVu Sans", sans-serif;
}
button, input, select { font: inherit; color: inherit; margin: 0; padding: 0; border: 0; background: none; min-width: 0; }
button { display: flex; align-items: center; justify-content: center; }
input, select { border-radius: 0; outline: 0; }
ul { list-style: none; margin: 0; padding: 0; }
svg { display: block; flex: none; }
.defs { position: absolute; width: 0; height: 0; }

.titlebar { flex: none; display: flex; align-items: center; height: 13px; padding: 0 1px; background: #fff; }
.logo { width: 10px; height: 10px; }
.apptitle { margin-left: 2px; font: 6px/10px "Noto Sans", sans-serif; color: #777; }
.winbtns { margin-left: auto; display: flex; gap: 20px; padding-right: 10px; }
.winbtns svg { width: 6px; height: 6px; }
.menubar { flex: none; display: flex; gap: 8px; height: 10px; padding-left: 4px; background: #fff; font: 6px/12px "Noto Sans", sans-serif; }
.menubar a { color: #777; text-decoration: none; }

.toolbar { flex: none; display: flex; height: 20px; border-bottom: 1px solid #c4c4c4; background: #efefef; }
.toolbar + .toolbar { height: 19px; border-bottom-color: #b5b5b9; }
.group { position: relative; display: flex; align-items: center; padding-left: 5px; border-right: 1px solid #cdcdcd; }
.group:last-child { border-right: 0; }
.group::before { content: ""; position: absolute; left: 2px; top: 3px; bottom: 3px; border-left: 1px dotted #aaa; }
.group button { flex: 1; height: 17px; }
.group svg { width: 13px; height: 13px; }
.group .active { background: #cce4f7; border: 1px solid #98c9ee; }
.g-file { width: 112px; }
.g-nav { width: 251px; }
.g-attr { width: 250px; }
.g-src { width: 95px; }
.g-edit { width: 222px; }
.g-label { width: 147px; }
.g-one { width: 24px; }
.group .dd, .tools .dd { flex: 0 0 8px; }
.dd::before { content: ""; border: 2px solid transparent; border-top: 3px solid #222; border-bottom: 0; }
.dim::before { border-top-color: #888; }

.work { flex: 1; min-height: 0; display: flex; }
.side { flex: 0 0 168px; display: flex; flex-direction: column; gap: 4px; padding: 1px 2px 1px 0; border-right: 1px solid #b0b0b4; }
.panel h2 { display: flex; align-items: center; justify-content: space-between; height: 10px; margin: 0; padding: 0 2px; background: #d9d9d9; font: inherit; }
.panel h2 span { display: flex; gap: 3px; }
.panel h2 svg { width: 6px; height: 6px; }
.tools { display: flex; align-items: center; height: 16px; padding-left: 1px; }
.tools button { width: 13px; }
.tools svg { width: 9px; height: 9px; }

.treebox { display: grid; grid-template-columns: 1fr 10px; grid-template-rows: 95px 9px; background: #fff; border: 1px solid #b9b9b9; border-left: 0; }
.tree { overflow: hidden; }
.tree li { display: flex; align-items: center; height: 11px; white-space: nowrap; gap: 3px; }
.tree svg { width: 9px; height: 9px; }
.tree .chev { width: 6px; height: 6px; flex: none; margin-right: 2px; }
.tree .l1 { padding-left: 14px; }
.tree .l2 { padding-left: 25px; }
.tree .l3 { padding-left: 36px; }
.vbar, .hbar { display: flex; align-items: center; background: #f0f0f0; }
.vbar { flex-direction: column; padding: 2px 0; }
.vbar i { width: 9px; height: 11px; margin: 3px 0 auto; background: #cdcdcd; }
.hbar { padding: 0 2px; }
.hbar i { width: 87px; height: 8px; margin: 0 auto 0 3px; background: #cdcdcd; }
.vbar svg, .hbar svg { width: 6px; height: 6px; }

.cad { display: flex; align-items: center; height: 20px; gap: 4px; }
.cad button { width: 16px; height: 16px; background: #cdcdcd; }
.cad svg { width: 14px; height: 14px; }
.cad .small { width: 12px; height: 12px; margin-left: auto; }
.cad .small svg { width: 9px; height: 9px; }
.field { display: flex; align-items: center; height: 14px; gap: 2px; }
.field button, .blank { width: 12px; height: 11px; }
.field button { background: #d2d2d2; }
.field svg { width: 9px; height: 9px; }
.field label { width: 4px; color: #777; text-align: center; }
.field input { flex: 1; height: 11px; border: 1px solid #dadada; background: #f2f2f2; }

.layers { flex: 1; display: flex; flex-direction: column; }
.layers .tools { height: 15px; }
.layerlist { flex: 1; background: #fff; border: 1px solid #b0b0b4; border-left: 0; }
.layerlist li { display: flex; align-items: center; gap: 3px; height: 11px; padding-left: 13px; font-weight: bold; }
.layerlist .current { background: #dcdcdc; }
.layerlist svg, .swatch { width: 9px; height: 9px; }
.swatch { background: #2828dc; }
input[type="checkbox"] { appearance: none; flex: none; width: 8px; height: 8px; border: 1px solid #777; background: #fff; display: grid; place-items: center; }
input[type="checkbox"]:checked::before { content: ""; width: 4px; height: 2px; border: solid #555; border-width: 0 0 1px 1px; transform: rotate(-45deg); }

.map { flex: 1; min-width: 0; overflow: hidden; background: #fff; border-bottom: 1px solid #a8a8b0; }
.map svg { width: 100%; height: 100%; }

.status { flex: none; display: flex; align-items: center; height: 15px; padding: 0 4px 0 2px; gap: 3px; white-space: nowrap; }
.status svg { width: 8px; height: 8px; }
.locate { display: flex; align-items: center; gap: 3px; width: 113px; height: 12px; padding-left: 4px; border: 1px solid #999; background: #fff; }
.locate input { flex: 1; }
.locate input::placeholder { color: #777; opacity: 1; }
.msg { margin: 0 auto 0 1px; }
.coord, .scale, .spin { height: 11px; border: 1px solid #aaa; background: #fff; }
.coord { width: 53px; padding-left: 1px; }
.scale { position: relative; width: 49px; }
.scale select { appearance: none; width: 100%; height: 9px; padding-left: 2px; }
.scale svg { position: absolute; right: 2px; top: 2px; width: 5px; height: 5px; }
.spin { display: flex; width: 46px; padding-left: 2px; }
.spin input { flex: 1; }
.arrows { width: 8px; display: grid; place-items: center; background: #e6e6e6; }
.arrows button::before { content: ""; border: 2px solid transparent; border-bottom: 2px solid #222; border-top: 0; }
.arrows button + button::before { border-top: 2px solid #222; border-bottom: 0; }
.near { margin-left: 3px; }
.crs { gap: 3px; margin-left: 7px; }
.chat { margin-left: 6px; }
.status .chat svg { width: 10px; height: 9px; }
```
